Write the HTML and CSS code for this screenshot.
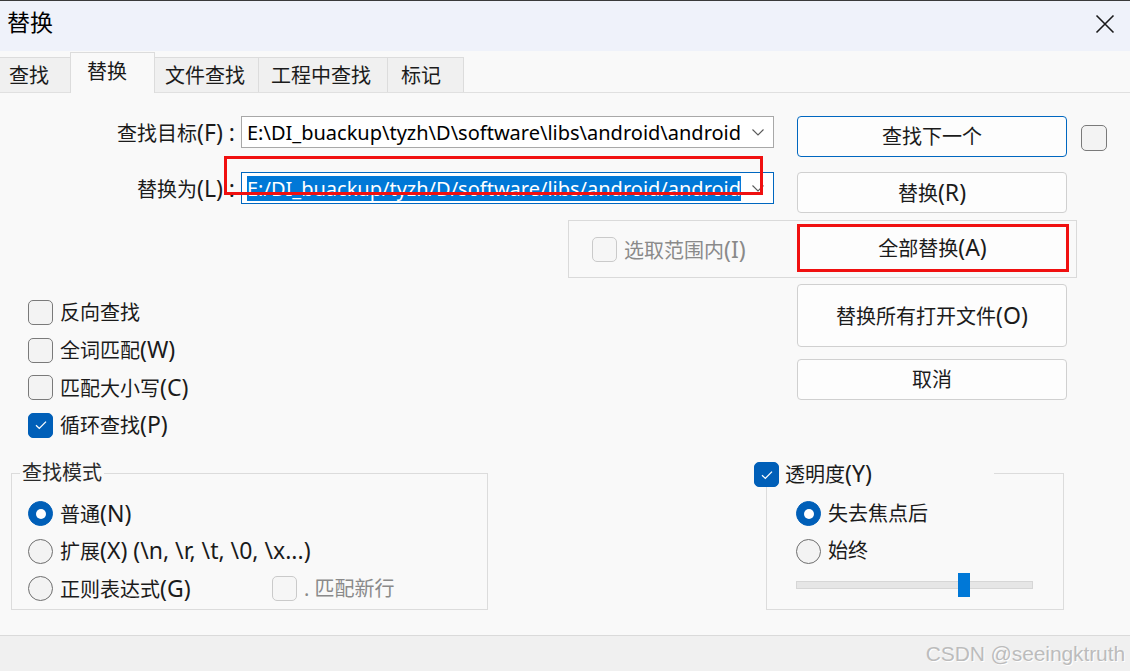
FILE: index.html
```html
<!DOCTYPE html>
<html lang="zh-CN">
<head>
<meta charset="utf-8">
<title>替换</title>
<link rel="stylesheet" href="styles.css">
</head>
<body>
<div class="window">
  <header class="titlebar">
    <span class="title">替换</span>
    <svg class="close" viewBox="0 0 20 20"><path d="M1.5 1.5 L18.5 18.5 M18.5 1.5 L1.5 18.5"/></svg>
  </header>

  <nav class="tabs">
    <div class="tab w1">查找</div>
    <div class="tab active w2">替换</div>
    <div class="tab w3">文件查找</div>
    <div class="tab w4">工程中查找</div>
    <div class="tab w5">标记</div>
  </nav>

  <main class="content">
    <section class="top">
      <label class="lbl row1">查找目标<span class="lat">(F) :</span></label>
      <div class="combo row1">
        <span class="combo-text">E:\DI_buackup\tyzh\D\software\libs\android\android</span>
        <svg class="chev" viewBox="0 0 12 7"><path d="M0.5 0.5 L6 6 L11.5 0.5"/></svg>
      </div>
      <button class="btn focus row1 bcol">查找下一个</button>
      <span class="cb big row1 ccol"></span>

      <label class="lbl row2">替换为<span class="lat">(L) :</span></label>
      <div class="combo focused row2">
        <span class="combo-text"><span class="sel">E:/DI_buackup/tyzh/D/software/libs/android/android</span></span>
        <svg class="chev" viewBox="0 0 12 7"><path d="M0.5 0.5 L6 6 L11.5 0.5"/></svg>
      </div>
      <button class="btn row2 bcol">替换<span class="lat">(R)</span></button>

      <div class="range row3">
        <div class="range-opt">
          <span class="cb disabled"></span>
          <span class="dis-text">选取范围内<span class="lat">(I)</span></span>
        </div>
        <button class="btn all">全部替换<span class="lat">(A)</span></button>
      </div>
    </section>

    <section class="mid">
      <div class="opts">
        <div class="opt"><span class="cb"></span><span>反向查找</span></div>
        <div class="opt"><span class="cb"></span><span>全词匹配<span class="lat">(W)</span></span></div>
        <div class="opt"><span class="cb"></span><span>匹配大小写<span class="lat">(C)</span></span></div>
        <div class="opt"><span class="cb checked"><svg viewBox="0 0 12 10"><path d="M1 5.2 L4.3 8.4 L11 1.6"/></svg></span><span>循环查找<span class="lat">(P)</span></span></div>
      </div>
      <div class="actions">
        <button class="btn tall">替换所有打开文件<span class="lat">(O)</span></button>
        <button class="btn">取消</button>
      </div>
    </section>

    <section class="bottom">
      <fieldset class="group find">
        <legend>查找模式</legend>
        <div class="opt"><span class="radio on"></span><span>普通<span class="lat">(N)</span></span></div>
        <div class="opt"><span class="radio"></span><span>扩展<span class="lat">(X) (\n, \r, \t, \0, \x...)</span></span></div>
        <div class="opt"><span class="radio"></span><span class="regex">正则表达式<span class="lat">(G)</span></span><span class="cb disabled"></span><span class="dis-text">. 匹配新行</span></div>
      </fieldset>

      <fieldset class="group trans">
        <legend><span class="cb checked"><svg viewBox="0 0 12 10"><path d="M1 5.2 L4.3 8.4 L11 1.6"/></svg></span><span>透明度<span class="lat">(Y)</span></span></legend>
        <div class="opt"><span class="radio on"></span><span>失去焦点后</span></div>
        <div class="opt"><span class="radio"></span><span>始终</span></div>
        <div class="slider"><div class="track"></div><div class="thumb" style="left: 162px"></div></div>
      </fieldset>
    </section>
  </main>

  <footer class="statusbar">
    <span class="watermark">CSDN @seeingktruth</span>
  </footer>

  <div class="mark mark1"></div>
  <div class="mark mark2"></div>
</div>
</body>
</html>
```

FILE: styles.css
```css
* { box-sizing: border-box; }

html, body { margin: 0; padding: 0; }

body {
  width: 1130px;
  height: 671px;
  overflow: hidden;
  background: #f9f9f9;
  font-family: "Noto Sans", "Noto Sans CJK SC", sans-serif;
  font-size: 20px;
  color: #1b1b1b;
}

.lat { font-size: 23px; }

.window {
  position: relative;
  height: 671px;
  display: flex;
  flex-direction: column;
}

/* title bar */
.titlebar {
  height: 51px;
  flex: none;
  background: #eff2fa;
  border-top: 1px solid #3a3a3a;
  display: flex;
  justify-content: space-between;
  align-items: flex-start;
  padding: 0 15px 0 7px;
}
.title {
  font-size: 23px;
  line-height: 30px;
  margin-top: 6px;
  color: #000;
}
.close {
  width: 20px;
  height: 20px;
  margin-top: 13px;
}
.close path { stroke: #1a1a1a; stroke-width: 1.6; fill: none; }

/* tabs */
.tabs {
  height: 42px;
  flex: none;
  display: flex;
  align-items: flex-end;
  border-bottom: 1px solid #e0e0e0;
  background: #f9f9f9;
}
.tab {
  height: 35px;
  line-height: 36px;
  background: #f0f0f0;
  border: 1px solid #dcdcdc;
  border-bottom: none;
  border-left: none;
  padding-left: 10px;
  white-space: nowrap;
  color: #1b1b1b;
}
.tab.active {
  height: 41px;
  margin-bottom: -1px;
  background: #f9f9f9;
  border-left: 1px solid #dcdcdc;
  line-height: 38px;
  padding-left: 16px;
}
.w1 { width: 71px; padding-left: 9px; }
.w2 { width: 85px; margin-left: -1px; }
.w3 { width: 104px; }
.w4 { width: 129px; padding-left: 12px; }
.w5 { width: 76px; padding-left: 13px; }

/* content */
.content {
  flex: 1;
  display: flex;
  flex-direction: column;
}

.top {
  margin-top: 23px;
  display: grid;
  grid-template-columns: 241px 327px 206px 23px 270px 14px 26px;
  grid-template-rows: 56px 48px 58px;
  align-items: start;
}
.row1 { grid-row: 1; }
.row2 { grid-row: 2; }
.row3 { grid-row: 3; }
.bcol { grid-column: 5; }
.ccol { grid-column: 7; margin-top: 9px; }

.lbl {
  grid-column: 1;
  line-height: 32px;
  height: 32px;
  text-align: right;
  padding-right: 6px;
  white-space: nowrap;
  color: #1b1b1b;
}

.combo {
  grid-column: 2 / 4;
  height: 32px;
  border: 1px solid #a8a8a8;
  background: #fff;
  display: flex;
  align-items: center;
  justify-content: space-between;
  padding: 0 9px 0 5px;
  overflow: hidden;
}
.combo.focused { border-color: #0067c0; }
.combo-text {
  white-space: nowrap;
  overflow: hidden;
  line-height: 25px;
  color: #000;
}
.sel {
  background: #0078d7;
  color: #fff;
  display: inline-block;
  line-height: 25px;
}
.chev { width: 12px; height: 7px; flex: none; }
.chev path { stroke: #5a5a5a; stroke-width: 1.1; fill: none; }

.btn {
  height: 41px;
  border: 1px solid #d0d0d0;
  border-radius: 4px;
  background: #fdfdfd;
  font-family: inherit;
  font-size: 20px;
  line-height: 26px;
  color: #1b1b1b;
  padding: 0;
}
.btn.focus { border-color: #0067c0; }

.range {
  grid-column: 3 / 7;
  margin-right: 4px;
  height: 58px;
  border: 1px solid #dadada;
  display: flex;
  align-items: flex-start;
}
.range-opt {
  width: 228px;
  height: 56px;
  padding-left: 23px;
  display: flex;
  align-items: center;
  gap: 7px;
}
.btn.all {
  width: 271px;
  height: 47px;
  margin-top: 3px;
}

/* checkboxes / radios */
.cb {
  width: 25px;
  height: 25px;
  flex: none;
  border: 1px solid #7a7a7a;
  border-radius: 5px;
  background: #f3f3f3;
  display: inline-flex;
  align-items: center;
  justify-content: center;
}
.cb.big { width: 26px; height: 26px; }
.cb.disabled { border-color: #cacaca; background: #f6f6f6; }
.cb.checked { background: #005fb8; border-color: #005fb8; }
.cb svg { width: 12px; height: 10px; }
.cb svg path { stroke: #fff; stroke-width: 1.3; fill: none; }

.dis-text { color: #8a8a8a; white-space: nowrap; }

.radio {
  width: 25px;
  height: 25px;
  flex: none;
  border-radius: 50%;
  border: 1px solid #6f6f6f;
  background: #f3f3f3;
  display: inline-flex;
  align-items: center;
  justify-content: center;
}
.radio.on { background: #005fb8; border-color: #005fb8; }
.radio.on::after {
  content: "";
  width: 10px;
  height: 10px;
  border-radius: 50%;
  background: #fff;
}

.opt {
  height: 37.5px;
  display: flex;
  align-items: center;
  gap: 7px;
  white-space: nowrap;
  line-height: 26px;
}

/* middle */
.mid {
  display: flex;
  margin-top: 6px;
}
.opts {
  flex: 1;
  padding-left: 28px;
  margin-top: 10px;
}
.actions {
  width: 270px;
  margin-right: 63px;
  display: flex;
  flex-direction: column;
  gap: 12px;
}
.btn.tall { height: 63px; }

/* bottom groups */
.bottom {
  display: flex;
  align-items: flex-start;
  margin-top: 17px;
}
.group {
  margin: 0;
  border: 1px solid #dcdcdc;
  min-width: 0;
}
.group legend {
  line-height: 24px;
  padding: 0;
}
.find {
  margin-left: 11px;
  width: 477px;
  padding: 10px 0 1px 16px;
}
.find legend {
  margin-left: -8px;
  padding: 0 2px;
  color: #2b2b2b;
}
.regex { width: 205px; }

.trans {
  margin-left: 278px;
  margin-top: -2px;
  width: 298px;
  padding: 8px 0 12px 29px;
}
.trans legend {
  margin-left: -42px;
  width: 240px;
  height: 28px;
  display: flex;
  align-items: flex-end;
  gap: 6px;
  line-height: 25px;
  color: #1b1b1b;
}

.slider {
  position: relative;
  width: 237px;
  height: 24px;
  margin-top: 3px;
  display: flex;
  align-items: center;
}
.track {
  width: 100%;
  height: 8px;
  background: #e6e6e6;
  border: 1px solid #d6d6d6;
}
.thumb {
  position: absolute;
  top: 0;
  width: 12px;
  height: 24px;
  background: #0078d7;
}

/* status bar */
.statusbar {
  height: 36px;
  flex: none;
  background: #f0f0f0;
  border-top: 1px solid #dadada;
  display: flex;
  justify-content: flex-end;
  align-items: center;
  padding-right: 5px;
}
.watermark {
  font-family: "Liberation Sans", sans-serif;
  font-size: 21px;
  color: #bcbcbc;
  text-shadow: 1px 1px 0 #ffffff;
  letter-spacing: -0.1px;
}

/* red annotation boxes drawn over the dialog */
.mark {
  position: absolute;
  border: 3px solid #f01010;
  pointer-events: none;
}
.mark1 { left: 224px; top: 156px; width: 539px; height: 39px; }
.mark2 { left: 797px; top: 224px; width: 272px; height: 48px; }
```
